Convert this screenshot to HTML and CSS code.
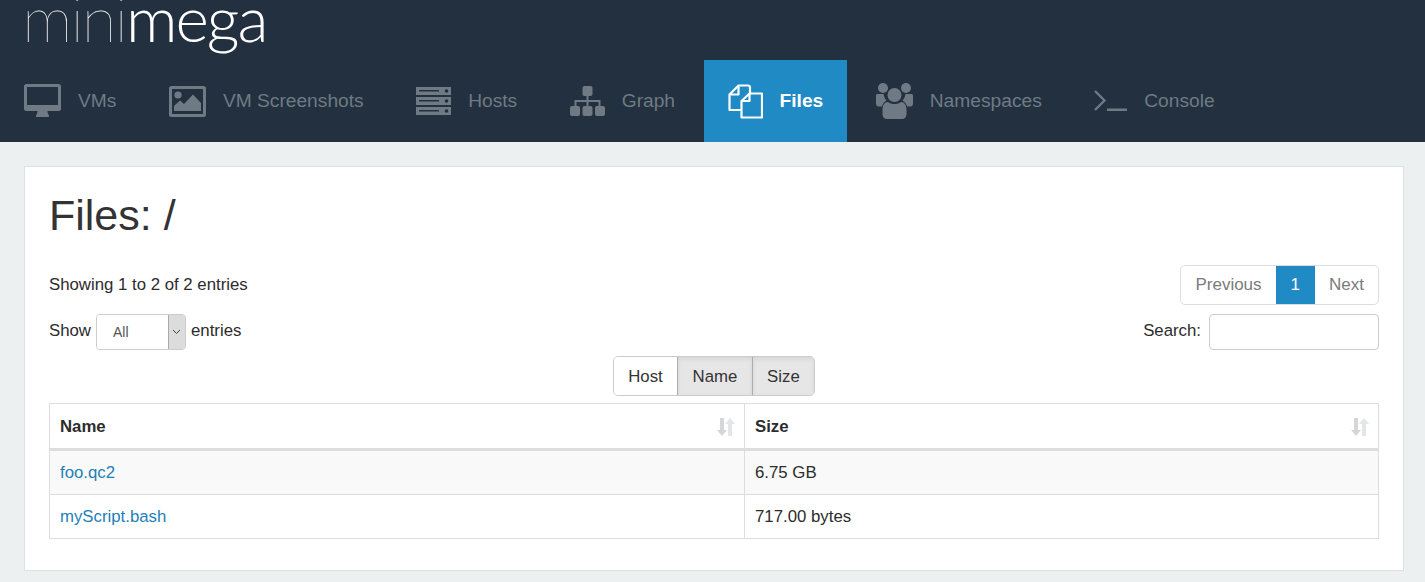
FILE: index.html
```html
<!DOCTYPE html>
<html lang="en">
<head>
    <meta charset="UTF-8">
    <meta name="viewport" content="width=device-width, initial-scale=1.0">
    <title>minimega</title>
    <link rel="stylesheet" href="styles.css">
</head>
<body>

<div class="header">
    <div class="logo"><span class="logo-thin">mini</span><span class="logo-bold">mega</span></div>
    <div class="nav">
        <a class="nav-item">
            <svg class="nav-icon" width="37" height="34" viewBox="0 0 37 34"><path fill="#6f7a84" fill-rule="evenodd" d="M2.5 0h32A2.500 2.500 0 0 1 37 2.500v22a2.500 2.500 0 0 1-2.500 2.500H23.500c0 2 .6 3.200 1.500 4.500v1c0 .4-.3.500-.6.500H12.600c-.3 0-.6-.1-.6-.5v-1c.9-1.300 1.500-2.500 1.500-4.500H2.500A2.500 2.500 0 0 1 0 24.500v-22A2.500 2.500 0 0 1 2.500 0zM3 3v18h31V3z"/></svg>
            <span>VMs</span>
        </a>
        <a class="nav-item">
            <svg class="nav-icon" width="37" height="31" viewBox="0 0 37 31"><path fill="#6f7a84" fill-rule="evenodd" d="M2.500 0h32A2.500 2.500 0 0 1 37 2.500v26a2.500 2.500 0 0 1-2.500 2.500h-32A2.500 2.500 0 0 1 0 28.500v-26A2.500 2.500 0 0 1 2.500 0zM3 3v25h31V3z"/><circle cx="9" cy="9" r="3.600" fill="#6f7a84"/><path fill="#6f7a84" d="M5 25v-5l6-5.500 4 3.500L24 8.500 32 17v8z"/></svg>
            <span>VM Screenshots</span>
        </a>
        <a class="nav-item">
            <svg class="nav-icon" width="35" height="28" viewBox="0 0 35 28"><g fill="#6f7a84"><rect width="35" height="8" y="0"/><rect width="35" height="8" y="10"/><rect width="35" height="8" y="20"/></g><g fill="#22303f"><rect x="3" y="3" width="20" height="1.500"/><rect x="3" y="13" width="20" height="1.500"/><rect x="3" y="23" width="20" height="1.500"/><circle cx="30.500" cy="4" r="1.800"/><circle cx="30.500" cy="14" r="1.800"/><circle cx="30.500" cy="24" r="1.800"/></g></svg>
            <span>Hosts</span>
        </a>
        <a class="nav-item">
            <svg class="nav-icon" width="35" height="30" viewBox="0 0 35 30"><g fill="#6f7a84"><rect x="12.500" y="0" width="10" height="10" rx="2"/><rect x="0" y="20" width="10" height="10" rx="2"/><rect x="12.500" y="20" width="10" height="10" rx="2"/><rect x="25" y="20" width="10" height="10" rx="2"/><path d="M16.500 10h2v4h12v6h-2v-4h-10v4h-2v-4h-10v4h-2v-6h12z"/></g></svg>
            <span>Graph</span>
        </a>
        <a class="nav-item active">
            <svg class="nav-icon" width="35" height="35" viewBox="0 0 35 35"><g fill="none" stroke="#fff" stroke-width="2.200" stroke-linejoin="round"><path d="M13 26H1.500V10.500L10.500 1.500h9.500a2 2 0 0 1 2 2V9"/><path d="M10.500 1.500V10.500H1.500"/><path d="M21.500 9.500H34V33.500H13.500V17z"/><path d="M21.500 9.500V17H13.500"/></g></svg>
            <span>Files</span>
        </a>
        <a class="nav-item">
            <svg class="nav-icon" width="37" height="36" viewBox="0 0 37 36"><g fill="#6f7a84"><circle cx="7" cy="5" r="5"/><circle cx="30" cy="5" r="5"/><circle cx="18.500" cy="12" r="7"/><path d="M1 11h6.500c.5 3 1.500 5 3 6.500-2.500 1.500-4 3.500-4.500 6H2.500C1 23.500 0 22.500 0 20.500V13c0-1 .3-2 1-2zM36 11h-6.500c-.5 3-1.500 5-3 6.500 2.500 1.500 4 3.500 4.500 6h3.500c1.500 0 2.500-1 2.500-3V13c0-1-.3-2-1-2z"/><path d="M12 19c2 1.500 4 2 6.500 2s4.500-.5 6.500-2c3.500 0 5.500 3 5.500 8v4c0 3-2 5-4.500 5H11c-2.500 0-4.500-2-4.500-5v-4c0-5 2-8 5.500-8z"/></g></svg>
            <span>Namespaces</span>
        </a>
        <a class="nav-item">
            <svg class="nav-icon" width="33" height="22" viewBox="0 0 33 22"><path fill="none" stroke="#6f7a84" stroke-width="2.400" d="M1 1l9.500 9.500L1 20"/><rect x="13" y="18.500" width="20" height="2.500" fill="#6f7a84"/></svg>
            <span>Console</span>
        </a>
    </div>
</div>

<div class="panel">
    <h1>Files: /</h1>

    <div class="row info-row">
        <div>Showing 1 to 2 of 2 entries</div>
        <div class="pagination">
            <a class="page">Previous</a>
            <a class="page current">1</a>
            <a class="page">Next</a>
        </div>
    </div>

    <div class="row filter-row">
        <div class="length">
            <span class="label">Show</span>
            <div class="select-box">
                <select><option>All</option></select>
                <span class="select-arrow"><svg width="9" height="6" viewBox="0 0 9 6"><path fill="none" stroke="#444" stroke-width="1" d="M1 1l3.500 3.500L8 1"/></svg></span>
            </div>
            <span class="label">entries</span>
        </div>
        <div class="search">
            <span class="label">Search:</span>
            <input type="text">
        </div>
    </div>

    <div class="toggle-row">
        <div class="toggle">
            <button>Host</button>
            <button class="on">Name</button>
            <button class="on">Size</button>
        </div>
    </div>

    <table>
        <thead>
            <tr>
                <th class="col-name"><div class="th-inner">Name
                    <svg width="18" height="18" viewBox="0 0 18 18"><path fill="#d6d6d6" d="M3 0h4v12h3l-5 6-5-6h3z"/><path fill="#e3e6e8" d="M13 0l5 6h-3v12h-4V6H8z"/></svg>
                </div></th>
                <th><div class="th-inner">Size
                    <svg width="18" height="18" viewBox="0 0 18 18"><path fill="#d6d6d6" d="M3 0h4v12h3l-5 6-5-6h3z"/><path fill="#e3e6e8" d="M13 0l5 6h-3v12h-4V6H8z"/></svg>
                </div></th>
            </tr>
        </thead>
        <tbody>
            <tr class="odd">
                <td><a>foo.qc2</a></td>
                <td>6.75 GB</td>
            </tr>
            <tr>
                <td><a>myScript.bash</a></td>
                <td>717.00 bytes</td>
            </tr>
        </tbody>
    </table>
</div>

</body>
</html>
```

FILE: styles.css
```css
* {
    box-sizing: border-box;
}
body {
    margin: 0;
    background: #ecf0f1;
    font-family: "Liberation Sans", Arial, sans-serif;
    font-size: 16.8px;
    color: #2c2c2c;
    overflow: hidden;
}
.header {
    height: 142px;
    background: #22303f;
}
.logo {
    height: 60px;
    padding-left: 22px;
    font-family: Lato, sans-serif;
    font-size: 64px;
    line-height: 36px;
    letter-spacing: -2px;
    color: #fff;
    overflow: hidden;
}
.logo-thin {
    font-weight: 100;
}
.logo-bold {
    font-weight: 300;
}
.nav {
    display: flex;
    height: 82px;
}
.nav-item {
    display: flex;
    align-items: center;
    padding: 0 24px;
    margin-right: 4.500px;
    font-size: 19.2px;
    color: #6f7a84;
}
.nav-icon {
    margin-right: 17px;
}
.active {
    background: #1f8ac4;
    color: #fff;
    font-weight: bold;
}
.panel {
    margin: 24px 21px 0 24px;
    height: 405px;
    padding: 0 24px;
    background: #fff;
    border: 1px solid #dde1e2;
}
h1 {
    margin: 0;
    padding-top: 24px;
    height: 98px;
    font-size: 43px;
    font-weight: 400;
    line-height: 48px;
    color: #333;
}
.row {
    display: flex;
    justify-content: space-between;
    align-items: center;
}
.info-row {
    height: 40px;
}
.pagination {
    display: flex;
    height: 40px;
    border: 1px solid #ddd;
    border-radius: 5px;
    overflow: hidden;
    font-size: 17px;
}
.page {
    display: flex;
    align-items: center;
    padding: 0 14px;
    color: #7b7b7b;
}
.current {
    background: #1f8ac4;
    color: #fff;
    padding: 0 15px;
    margin-top: -1px;
    margin-bottom: -1px;
}
.filter-row {
    height: 36px;
    margin-top: 9px;
}
.label {
    padding-bottom: 2px;
}
.length {
    display: flex;
    align-items: center;
    gap: 5px;
}
.select-box {
    display: flex;
    width: 90px;
    height: 36px;
    border: 1px solid #ccc;
    border-radius: 4px;
    overflow: hidden;
}
.select-box select {
    flex: 1;
    min-width: 0;
    padding-left: 16px;
    border: none;
    background: #fff;
    appearance: none;
    font-family: "Liberation Sans", Arial, sans-serif;
    font-size: 14px;
    color: #555;
}
.select-arrow {
    display: flex;
    align-items: center;
    justify-content: center;
    width: 17px;
    background: #dcdcdc;
    border-left: 1px solid #aaa;
}
.search {
    display: flex;
    align-items: center;
    gap: 8px;
}
.search input {
    width: 170px;
    height: 36px;
    border: 1px solid #ccc;
    border-radius: 4px;
}
.toggle-row {
    display: flex;
    justify-content: center;
    margin-top: 6px;
    margin-bottom: 7px;
}
.toggle {
    display: flex;
    height: 40px;
    border: 1px solid #ccc;
    border-radius: 5px;
    overflow: hidden;
}
.toggle button {
    padding: 2px 14.400px 0;
    border: none;
    background: #fff;
    font-family: "Liberation Sans", Arial, sans-serif;
    font-size: 16.8px;
    color: #333;
}
.toggle .on {
    background: #e6e6e6;
    border-left: 1px solid #adadad;
    box-shadow: inset 0 2px 4px rgba(0, 0, 0, 0.08);
}
table {
    width: 100%;
    border-collapse: collapse;
    table-layout: fixed;
}
th, td {
    border: 1px solid #ddd;
    padding: 0 10px;
    text-align: left;
}
th {
    height: 46px;
    padding-top: 1px;
    border-bottom-width: 3px;
}
td {
    height: 44px;
}
.odd td {
    height: 45px;
}
.col-name {
    width: 695px;
}
.th-inner {
    display: flex;
    justify-content: space-between;
    align-items: center;
}
.th-inner svg {
    margin-right: -1px;
}
.odd {
    background: #f9f9f9;
}
td a {
    color: #1f80b8;
}
```
